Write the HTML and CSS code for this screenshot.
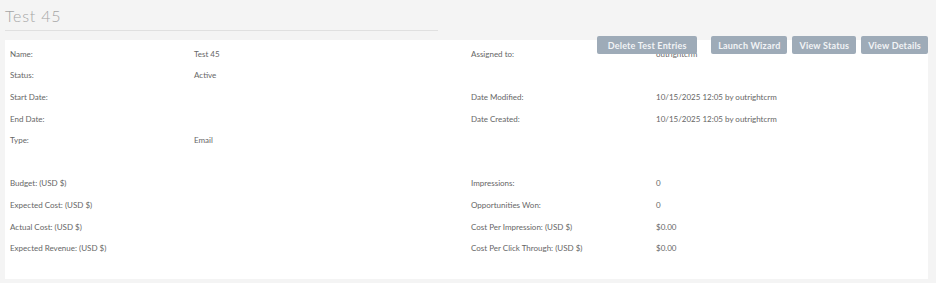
FILE: index.html
```
<!DOCTYPE html>
<html>
  <head>
    <meta charset="UTF-8">
    <title>Test 45</title>
    <link rel="stylesheet" href="styles.css">
  </head>
  <body>
    <div class="header">
      <h2 class="title">Test 45</h2>
      <div class="rule"></div>
    </div>
    <div class="actions">
      <button class="btn btn-first">Delete Test Entries</button>
      <button class="btn">Launch Wizard</button>
      <button class="btn">View Status</button>
      <button class="btn">View Details</button>
    </div>
    <section class="panel">
      <div class="row">
        <span class="label">Name:</span><span class="value">Test 45</span>
        <span class="label">Assigned to:</span><span class="value">outrightcrm</span>
      </div>
      <div class="row">
        <span class="label">Status:</span><span class="value">Active</span>
        <span class="label"></span><span class="value"></span>
      </div>
      <div class="row">
        <span class="label">Start Date:</span><span class="value"></span>
        <span class="label">Date Modified:</span><span class="value">10/15/2025 12:05 by outrightcrm</span>
      </div>
      <div class="row">
        <span class="label">End Date:</span><span class="value"></span>
        <span class="label">Date Created:</span><span class="value">10/15/2025 12:05 by outrightcrm</span>
      </div>
      <div class="row">
        <span class="label">Type:</span><span class="value">Email</span>
        <span class="label"></span><span class="value"></span>
      </div>
      <div class="row"></div>
      <div class="row">
        <span class="label">Budget: (USD $)</span><span class="value"></span>
        <span class="label">Impressions:</span><span class="value">0</span>
      </div>
      <div class="row">
        <span class="label">Expected Cost: (USD $)</span><span class="value"></span>
        <span class="label">Opportunities Won:</span><span class="value">0</span>
      </div>
      <div class="row">
        <span class="label">Actual Cost: (USD $)</span><span class="value"></span>
        <span class="label">Cost Per Impression: (USD $)</span><span class="value">$0.00</span>
      </div>
      <div class="row">
        <span class="label">Expected Revenue: (USD $)</span><span class="value"></span>
        <span class="label">Cost Per Click Through: (USD $)</span><span class="value">$0.00</span>
      </div>
    </section>
  </body>
</html>
```
FILE: styles.css
```
body{
    margin:0;
    background:#f4f4f4;
    font-family:Lato,"Open Sans",sans-serif;
    font-size:8px;
    color:#555;
    position:relative;
    height:283px;
    overflow:hidden;
}
.header{
    padding:5px 0 0 5px;
    height:35px;
    box-sizing:border-box;
}
.title{
    margin:0;
    font-size:16px;
    font-weight:300;
    letter-spacing:0.8px;
    color:#a5a5a5;
    line-height:22px;
}
.rule{
    width:433px;
    height:1px;
    margin-top:3px;
    background:#e0e0e0;
}
.panel{
    margin:5px 8px 0 5px;
    height:239px;
    box-sizing:border-box;
    padding:3px 0 0 5px;
    background:#fff;
}
.row{
    display:grid;
    grid-template-columns:184px 277px 185px 1fr;
    height:21.6px;
    align-items:center;
}
.label{
    color:#666;
}
.value{
    color:#666;
}
.actions{
    position:absolute;
    top:36px;
    right:8px;
    display:flex;
    gap:5px;
}
.btn{
    height:18px;
    padding:0 7px;
    border:none;
    border-radius:2px;
    background:#9eabb8;
    color:#f2f4f6;
    font-family:Lato,"Open Sans",sans-serif;
    font-weight:700;
    font-size:9px;
    letter-spacing:0.2px;
}
.btn-first{
    min-width:100px;
    margin-right:9px;
}
```
